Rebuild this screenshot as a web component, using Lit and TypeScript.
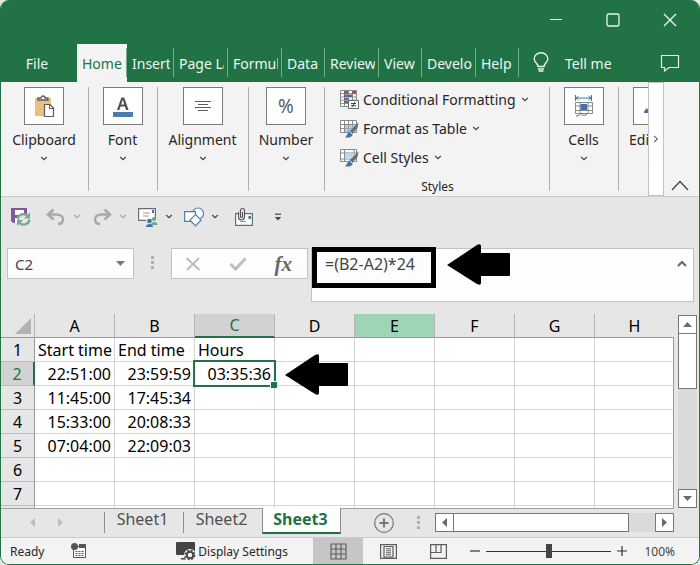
import { LitElement, html, css, svg } from "lit";
import { customElement, state } from "lit/decorators.js";
import { classMap } from "lit/directives/class-map.js";

const TABS = [
  { label: "Home", size: "w50" },
  { label: "Insert", size: "w47" },
  { label: "Page La", size: "w54" },
  { label: "Formul", size: "w54" },
  { label: "Data", size: "w43" },
  { label: "Review", size: "w54" },
  { label: "View", size: "w43" },
  { label: "Develo", size: "w54" },
  { label: "Help", size: "w43" },
];

const COLUMNS = ["A", "B", "C", "D", "E", "F", "G", "H"];

const ROWS = [
  ["Start time", "End time", "Hours"],
  ["22:51:00", "23:59:59", "03:35:36"],
  ["11:45:00", "17:45:34"],
  ["15:33:00", "20:08:33"],
  ["07:04:00", "22:09:03"],
  [],
  [],
];

const box = (w: number, h: number, body: unknown) =>
  html`<svg width=${w} height=${h} viewBox="0 0 ${w} ${h}" fill="none" aria-hidden="true">${body}</svg>`;

const chevron = (color = "#444") =>
  box(8, 5, svg`<path d="M1.2 1 L4 3.7 L6.8 1" stroke=${color} stroke-width="1.2"/>`);

const arrow = () =>
  box(63, 41, svg`<path d="M0 21 L30 1 Q34 -1 34 2 V9 H62 Q63 9 63 10 V31 Q63 32 62 32 H34 V39 Q34 42 30 40 Z" fill="#000"/>`);

const brush = svg`<path d="M18.5 2.5 L17.5 8 L11.5 14 L9 11.8 Z" fill="#6b6b6b"/><path d="M11 11.6 L13 13.4 C12.6 17 9 18 5 17.4 C7.5 16 7 12 11 11.6 Z" fill="#3f74ab"/><path d="M9.6 11.6 L12.6 14.2" stroke="#fff" stroke-width="1"/>`;

const icons = {
  clipboard: box(22, 22, svg`<path d="M2 3 H18 V21 H2 Z" fill="#e8c07c"/><path d="M5 5 V3 H8 A2 2 0 0 1 12 3 H15 V5 Z" fill="#fff" stroke="#5a5a5a" stroke-width="1.3"/><path d="M11.5 9.5 H17 L20.5 13 V21.5 H11.5 Z" fill="#fff" stroke="#5a5a5a" stroke-width="1.2"/><path d="M16.5 9.5 V13.5 H20.5" stroke="#5a5a5a"/>`),
  font: box(22, 22, svg`<path d="M5 15 L9.4 2.5 H12.2 L16.6 15 H14 L12.9 11.6 H8.5 L7.4 15 Z M9.2 9.5 H12.3 L10.8 4.8 Z" fill="#505050" fill-rule="evenodd"/><path d="M1 17 H21 V22 H1 Z" fill="#4a7cae"/>`),
  align: box(22, 22, svg`<path d="M3 6.5 H19 M6 9.5 H16 M3 12.5 H19 M6 15.5 H16" stroke="#5c5c5c"/>`),
  cells: box(22, 22, svg`<path d="M3 3 H18 M5.5 1 L3 3 L5.5 5 M15.5 1 L18 3 L15.5 5 M2.5 0 V6 M18.5 0 V6" stroke="#3f74ab"/><path d="M2.5 7.5 H19.5 V18.5 H2.5 Z M2.5 11 H19.5 M2.5 15.5 H19.5 M7 7.5 V18.5 M15 7.5 V18.5" fill="#fff" stroke="#8a8a8a"/><path d="M7.5 9 H14 V15 H7.5 Z" fill="#3f74ab"/><path d="M3 21 C6 21 7 18.5 9 18.5 C8 21 13 21 14.5 18.5" stroke="#6a6a6a"/>`),
  edit: box(22, 22, svg`<path d="M0 18 C0 15 2 14 3 13 L4 15 V18 Z" fill="#3f74ab"/>`),
  conditional: box(20, 19, svg`<path d="M.5 .5 H16.5 V16.5 H.5 Z M.5 3.7 H16.5 M.5 7 H16.5 M.5 10.2 H16.5 M.5 13.4 H16.5 M4.5 .5 V16.5 M8.5 .5 V16.5 M12.5 .5 V16.5" fill="#fff" stroke="#8a8a8a"/><path d="M4 1 H8 V4 H4 Z M12 1 H16 V4 H12 Z M4 8 H8 V10 H4 Z" fill="#b4513f"/><path d="M4 4.5 H12 V7 H4 Z M4 11 H8 V13 H4 Z" fill="#3f74ab"/><path d="M8.5 10.5 H18.5 V18.5 H8.5 Z" fill="#fff" stroke="#6a6a6a"/><path d="M11 13.5 H16 M11 15.7 H16 M15 11.8 L12 17.2" stroke="#444"/>`),
  table: box(20, 18, svg`<path d="M.5 .5 H16.5 V12.5 H.5 Z M.5 4.5 H16.5 M.5 8.5 H16.5 M4.5 .5 V12.5 M8.5 .5 V12.5 M12.5 .5 V12.5" fill="#fff" stroke="#8a8a8a"/><path d="M5 5 H16 V12 H5 Z" fill="#b5cde3"/><path d="M5 8.5 H16 M8.5 5 V12 M12.5 5 V12" stroke="#90a9c0"/>${brush}`),
  styles: box(20, 18, svg`<path d="M.5 .5 H16.5 V12.5 H.5 Z M.5 4 H16.5 M.5 10 H16.5 M4.5 .5 V12.5 M14 .5 V12.5" fill="#fff" stroke="#8a8a8a"/><path d="M5 4.5 H14 V10 H5 Z" fill="#c3d7ea"/>${brush}`),
  bulb: box(16, 22, svg`<path d="M5 14.5 C5 11.5 1.2 10.5 1.2 7 A6.8 6.3 0 0 1 14.8 7 C14.8 10.5 11 11.5 11 14.5 Z M5 17 H11 M5.5 19 H10.5" stroke="#e9f4ed" stroke-width="1.4"/>`),
  comment: box(20, 18, svg`<path d="M1.5 1.5 H18.5 V13.5 H9 L4.5 17 V13.5 H1.5 Z" stroke="#e9f4ed" stroke-width="1.2"/>`),
  minimize: box(14, 14, svg`<path d="M1 6.5 H13" stroke="#e9f4ed" stroke-width="1.2"/>`),
  maximize: box(14, 14, svg`<rect x="1" y="1" width="12" height="12" rx="1.5" stroke="#e9f4ed" stroke-width="1.3"/>`),
  close: box(14, 14, svg`<path d="M1 1 L13 13 M13 1 L1 13" stroke="#e9f4ed" stroke-width="1.4"/>`),
  save: box(20, 20, svg`<path d="M0 1 H16 V8 H13 V3 H4 V8 H8 V16 H2 L0 14 Z" fill="#7d5a9b"/><path d="M4 3 H13 V8 H4 Z" fill="#fff"/><path d="M4 11 H7 V16 H4 Z" fill="#fff"/><path d="M6.5 11.5 A6 6 0 0 1 17 9.5 M18.5 12.5 A6 6 0 0 1 8 15.5" stroke="#7da890" stroke-width="2.4"/><path d="M19 5.5 V11.5 H13 Z M6 19 V13 H12 Z" fill="#7da890"/>`),
  undo: box(20, 18, svg`<path d="M7.5 1.5 L2 6.5 L7.5 11.5" stroke="#a9a9a9" stroke-width="2.6"/><path d="M2.5 6.5 H10 C15.5 6.5 17.5 9 17 12 C16.7 14.5 14.5 16 12 16" stroke="#a9a9a9" stroke-width="2.4"/>`),
  redo: box(20, 18, svg`<path d="M12.5 1.5 L18 6.5 L12.5 11.5" stroke="#a9a9a9" stroke-width="2.6"/><path d="M17.5 6.5 H10 C4.5 6.5 2.5 9 3 12 C3.3 14.5 5.5 16 8 16" stroke="#a9a9a9" stroke-width="2.4"/>`),
  mail: box(20, 20, svg`<path d="M.6 1.6 H17.4 V13.4 H.6 Z" fill="#fff" stroke="#6c6c6c" stroke-width="1.2"/><path d="M5 6 H12 M5 9 H11" stroke="#9a9a9a"/><path d="M14 3 H16 V6 H14 Z" fill="#3f74ab"/><path d="M8 12 H19 V20 H8 Z" fill="#e6e6e6"/><circle cx="16" cy="12" r="2.1" fill="#6ba58a"/><path d="M13 18 C13 14 19.5 14 19.5 18 Z" fill="#6ba58a"/><circle cx="11.5" cy="14" r="2.3" fill="#3f74ab"/><path d="M8 20 C8 16 15 16 15 20 Z" fill="#3f74ab"/>`),
  shapes: box(20, 20, svg`<circle cx="14" cy="6.5" r="5.5" fill="#fff" stroke="#4f7fad" stroke-width="1.2"/><path d="M.6 4.6 H11.4 V14.4 H.6 Z" fill="#fff" stroke="#4f7fad" stroke-width="1.2"/><path d="M11.5 7.5 L17 13.2 L11.5 19 L6 13.2 Z" fill="#fff" stroke="#4f7fad" stroke-width="1.2"/>`),
  attach: box(20, 20, svg`<path d="M.6 6.6 H17.4 V18.4 H.6 Z" fill="#fff" stroke="#6c6c6c" stroke-width="1.2"/><path d="M13.5 9 H16 V12 H13.5 Z" fill="#3f74ab"/><path d="M5 14.5 H11" stroke="#999"/><path d="M3.5 5 V10 A3 3 0 0 0 9.5 10 V3.5 A2 2 0 0 0 5.5 3.5 V9.5 A1 1 0 0 0 7.5 9.5 V5" fill="#e6e6e6" stroke="#555" stroke-width="1.1"/>`),
  more: box(8, 8, svg`<path d="M1 1.2 H7" stroke="#444" stroke-width="1.2"/><path d="M.8 4 H7.2 L4 7.4 Z" fill="#444"/>`),
  cancel: box(16, 14, svg`<path d="M1.5 1 L14.5 13 M14 1 L2 13" stroke="#bdbdbd" stroke-width="2"/>`),
  enter: box(18, 14, svg`<path d="M1.5 7 L6.5 12 L16.5 1.5" stroke="#bdbdbd" stroke-width="3"/>`),
  corner: box(16, 16, svg`<path d="M16 0 V16 H0 Z" fill="#b3b3b3"/>`),
  add: box(22, 22, svg`<circle cx="11" cy="11" r="9.3" stroke="#777" stroke-width="1.2"/><path d="M11 6.5 V15.5 M6.5 11 H15.5" stroke="#777" stroke-width="2"/>`),
  macro: box(16, 16, svg`<path d="M2.5 3.5 H14.5 V14.5 H2.5 Z" fill="#fff" stroke="#555"/><path d="M8 1 H15 V5 H8 Z" fill="#555"/><circle cx="3.5" cy="3.5" r="3.5" fill="#555"/><path d="M4.5 8.5 H13 M4.5 10.5 H13 M4.5 12.5 H13" stroke="#555" stroke-dasharray="2 1"/>`),
  display: box(20, 19, svg`<path d="M1 0 H18 A1 1 0 0 1 19 1 V12 A1 1 0 0 1 18 13 H1 A1 1 0 0 1 0 12 V1 A1 1 0 0 1 1 0 Z M8 13 H10 V16 H8 Z M5 16 H12 V17.5 H5 Z" fill="#444"/><circle cx="14" cy="13" r="6" fill="#f3f3f3"/><circle cx="14" cy="13" r="3.2" stroke="#444" stroke-width="1.8"/><circle cx="14" cy="13" r="4.6" stroke="#444" stroke-width="1.4" stroke-dasharray="2.2 1.4"/>`),
  normal: box(17, 17, svg`<path d="M1 1 H16 V16 H1 Z M1 6 H16 M1 11 H16 M6 1 V16 M11 1 V16" stroke="#5c5c5c" stroke-width="1.1"/>`),
  page: box(17, 17, svg`<path d="M.6 1.6 H16.4 V15.4 H.6 Z M4 3.5 H13 V14 H4 Z" stroke="#5c5c5c" stroke-width="1.2"/><path d="M6 5.8 H11 M6 7.8 H11 M6 9.8 H11 M6 11.8 H11" stroke="#5c5c5c"/>`),
  breaks: box(17, 17, svg`<path d="M.6 1.6 H16.4 V15.4 H.6 Z M.6 9.5 H11 V1.6 M6 1.6 V9.5" stroke="#5c5c5c" stroke-width="1.2"/>`),
};

@customElement("app-root")
export class AppRoot extends LitElement {
  @state() private sheet = "Sheet3";
  @state() private tab = "Home";

  static styles = css`
    :host {
      display: block;
      background: #e4ebe7;
      color: #262626;
      font-family: "Noto Sans", "Open Sans", sans-serif;
      font-size: 14px;
    }
    * { box-sizing: border-box; }
    button, input, textarea {
      font: inherit;
      color: inherit;
      border: 0;
      margin: 0;
      padding: 0;
      background: none;
      border-radius: 0;
      outline: none;
    }
    button { display: flex; align-items: center; justify-content: center; white-space: nowrap; flex: none; }
    svg { display: block; flex: none; }
    .window {
      display: flex;
      flex-direction: column;
      min-height: 100vh;
      border: 1px solid #217346;
      border-top: 0;
      border-radius: 9px;
      overflow: hidden;
      background: #e6e6e6;
    }
    .titlebar {
      display: flex;
      justify-content: flex-end;
      align-items: center;
      height: 44px;
      padding: 0 1px 4px 0;
      background: #217346;
    }
    .titlebar button { width: 57px; height: 40px; }
    .tabs {
      display: flex;
      align-items: stretch;
      height: 38px;
      background: #217346;
      color: #eef6f1;
    }
    .tab {
      position: relative;
      justify-content: flex-start;
      padding: 0 4px 0 5px;
      height: 38px;
    }
    .tab::after {
      content: "";
      position: absolute;
      right: 0;
      top: 4px;
      width: 1px;
      height: 29px;
      background: #6fae8b;
    }
    .tab.on { background: #f3f3f3; color: #217346; }
    .clip { overflow: hidden; }
    .w43 { width: 43px; }
    .w47 { width: 47px; }
    .w50 { width: 50px; }
    .w54 { width: 54px; }
    .file { width: 76px; padding-right: 4px; }
    .tell { gap: 16px; padding-left: 14px; }
    .note { margin-left: auto; width: 58px; }
    .ribbon {
      display: grid;
      grid-template-columns: 88px 69px 91px 76px 225px 69px minmax(0, 1fr) 16px 35px;
      height: 115px;
      background: #f3f3f3;
      border-bottom: 1px solid #cbcbcb;
    }
    .group {
      position: relative;
      display: flex;
      flex-direction: column;
      align-items: center;
      padding: 5px 2px 0 0;
      overflow: hidden;
    }
    .group::after {
      content: "";
      position: absolute;
      right: 0;
      top: 5px;
      width: 1px;
      height: 104px;
      background: #b0b0b0;
    }
    .group.last { align-items: flex-start; padding: 5px 0 0 10px; }
    .group.last::after { content: none; }
    .big { flex-direction: column; }
    .last .big { align-items: flex-start; }
    .last .chev { display: none; }
    .tile {
      display: flex;
      align-items: center;
      justify-content: center;
      width: 40px;
      height: 38px;
      border: 1px solid #7b7b7b;
      background: #fff;
    }
    .last .tile { margin-left: 4px; justify-content: flex-start; padding-left: 10px; }
    .percent { font-size: 19px; color: #5c5c5c; }
    .label { line-height: 20px; padding: 5px 0 6px; }
    .group.styles { align-items: stretch; padding: 5px 15px 0; }
    .styles button { height: 29px; gap: 3px; justify-content: flex-start; padding-bottom: 4px; }
    .styles .chev { padding-left: 2px; }
    .caption { margin: auto 0 0; text-align: center; font-size: 12px; line-height: 19px; }
    .scroll { height: 114px; background: #fff; border: 1px solid #c3c3c3; }
    .collapse { align-items: flex-end; padding: 0 4px 5px 0; height: 114px; }
    .quick { display: flex; align-items: center; gap: 11px; height: 41px; padding: 0 0 2px 10px; }
    .quick button { height: 24px; gap: 7px; }
    .quick .save { margin-right: 4px; }
    .quick .attach { margin-left: 5px; }
    .quick .more { margin-left: 8px; }
    .bar { display: flex; align-items: flex-start; padding: 10px 5px 12px 6px; }
    .field { display: flex; align-items: center; height: 31px; background: #fdfdfd; border: 1px solid #c3c3c3; }
    .name { width: 127px; padding: 0 7px; font-size: 15px; color: #444; }
    .name input { flex: 1; min-width: 0; }
    .dots { display: flex; flex-direction: column; gap: 2px; padding: 8px 17px; }
    .dots i { width: 3px; height: 3px; background: #b0b0b0; }
    .actions { width: 137px; justify-content: space-between; padding: 0 15px 0 13px; margin-right: 3px; }
    .fx { font-family: "Liberation Serif", serif; font-style: italic; font-weight: 700; font-size: 21px; line-height: 24px; color: #666; }
    .formula {
      position: relative;
      display: flex;
      flex: 1;
      height: 54px;
      background: #fdfdfd;
      border: 1px solid #c3c3c3;
    }
    .formula textarea {
      flex: 1;
      min-width: 0;
      resize: none;
      padding: 4px 0 0 13px;
      font-size: 16px;
      line-height: 22px;
      color: #444;
      overflow: hidden;
    }
    .formula button { width: 22px; height: 28px; }
    .ring { position: absolute; left: 0; top: -2px; width: 124px; height: 41px; border: 5px solid #000; pointer-events: none; }
    .hint { position: absolute; left: 135px; top: -5px; pointer-events: none; }
    .sheet { display: flex; flex: 1; padding-right: 2px; }
    .gridwrap { flex: 1; min-width: 0; }
    table { width: 100%; table-layout: fixed; border-collapse: separate; border-spacing: 0; color: #000; }
    .c0 { width: 34px; }
    .cn { width: 80px; }
    th, td { height: 24px; padding: 0; line-height: 22px; font-size: 16px; font-weight: 400; white-space: nowrap; }
    th { text-align: center; }
    thead th { border-bottom: 1px solid #999; border-right: 1px solid #b5b5b5; }
    thead th:last-child { border-right: 0; }
    thead .act { background: #d2d2d2; color: #217346; border-bottom: 2px solid #217346; line-height: 21px; }
    thead .hover { background: #9fd5b7; }
    .corner { padding: 0 4px 0 14px; }
    tbody th { background: #e6e6e6; border-bottom: 1px solid #bcbcbc; border-right: 1px solid #999; }
    tbody .act { background: #d2d2d2; color: #217346; border-right: 2px solid #217346; }
    td { background: #fff; border-right: 1px solid #d4d4d4; border-bottom: 1px solid #d4d4d4; padding: 0 3px; }
    td:last-child { border-right-color: #999; }
    .num { text-align: right; }
    .stub { height: 2px; border-bottom: 0; line-height: 0; }
    .sel { position: relative; }
    .sel::before { content: ""; position: absolute; inset: -2px; border: 2px solid #217346; }
    .sel::after { content: ""; position: absolute; right: -3px; bottom: -3px; width: 6px; height: 6px; background: #217346; border: solid #fff; border-width: 1px 0 0 1px; }
    .sel .hint { left: 90px; top: -8px; }
    .vscroll { display: flex; flex-direction: column; width: 19px; margin: 1px 0 0 4px; background: #dadada; }
    .sb { width: 19px; height: 19px; background: #fff; border: 1px solid #777; }
    .vthumb { height: 56px; margin-top: -1px; background: #fff; border: 1px solid #777; }
    .grow { flex: 1; }
    .sheets { display: flex; align-items: flex-start; height: 29px; padding-right: 25px; position: relative; }
    .edge { position: absolute; left: 0; right: 25px; top: 0; height: 1px; background: #a0a0a0; }
    .nav { width: 28px; height: 28px; }
    .nav:first-of-type { margin-left: 17px; }
    .tabset { display: flex; padding-left: 30px; }
    .stab {
      position: relative;
      width: 79px;
      height: 25px;
      padding-right: 2px;
      font-size: 16px;
      line-height: 22px;
      align-items: flex-start;
      color: #505050;
    }
    .stab::before { content: ""; position: absolute; left: 0; top: 4px; height: 21px; width: 1px; background: #8c8c8c; }
    .stab.on { background: #fff; color: #217346; font-weight: 700; height: 26px; border: 1px solid #8c8c8c; border-width: 0 1px 2px; border-bottom-color: #217346; }
    .stab.on::before { content: none; }
    .add { margin: 4px 0 0 32px; }
    .grip { padding: 8px 15px 0 22px; }
    .hscroll { display: flex; flex: 1; margin: 5px 0 0; background: #dadada; }
    .hthumb { flex: 1; height: 19px; margin: 0 26px 0 -1px; background: #fff; border: 1px solid #777; }
    .status {
      display: flex;
      align-items: center;
      height: 27px;
      padding: 0 24px 0 9px;
      background: #f3f3f3;
      border-top: 1px solid #cbcbcb;
      font-size: 12px;
      white-space: nowrap;
    }
    .rec { margin-left: 27px; }
    .disp { margin-left: auto; gap: 2px; padding-right: 25px; }
    .view { width: 50px; height: 26px; }
    .view.on { background: #c6c6c6; }
    .zoom { width: 10px; height: 24px; }
    .range { appearance: none; width: 125px; height: 24px; margin: 0 6px; }
    .range::-webkit-slider-runnable-track { height: 1px; background: #333; }
    .range::-webkit-slider-thumb { appearance: none; width: 6px; height: 14px; margin-top: -7px; background: #444; }
    .zooms { display: flex; align-items: center; padding-left: 7px; }
    .pct { width: 48px; text-align: right; color: #444; }
  `;

  private tri(dir: string, color = "#6a6a6a") {
    const shapes: Record<string, string> = {
      up: "M1 8 H10 L5.5 3 Z",
      down: "M1 3 H10 L5.5 8 Z",
      left: "M8 1 V10 L3 5.5 Z",
      right: "M3 1 V10 L8 5.5 Z",
    };
    return box(11, 11, svg`<path d=${shapes[dir]} fill=${color}/>`);
  }

  private group(label: string, icon: unknown, extra = "") {
    return html`<section class="group ${extra}">
      <button class="big">
        <span class="tile">${icon}</span>
        <span class="label">${label}</span>
        <span class="chev">${chevron()}</span>
      </button>
    </section>`;
  }

  private cell(r: number, c: number) {
    const selected = r === 1 && c === 2;
    return html`<td class=${classMap({ num: r > 0, sel: selected })}>${ROWS[r][c] ?? ""}${selected
      ? html`<span class="hint">${arrow()}</span>`
      : ""}</td>`;
  }

  render() {
    return html`<main class="window">
      <header>
        <div class="titlebar">
          <button aria-label="Minimize">${icons.minimize}</button>
          <button aria-label="Maximize">${icons.maximize}</button>
          <button aria-label="Close">${icons.close}</button>
        </div>
        <nav class="tabs">
          <button class="file">File</button>
          ${TABS.map(
            (t) => html`<button
              class=${classMap({ tab: true, on: t.label === this.tab, [t.size]: true })}
              @click=${() => (this.tab = t.label)}
            ><span class="clip">${t.label}</span></button>`
          )}
          <button class="tell">${icons.bulb}<span>Tell me</span></button>
          <button class="note" aria-label="Comments">${icons.comment}</button>
        </nav>
      </header>

      <div class="ribbon">
        ${this.group("Clipboard", icons.clipboard)}
        ${this.group("Font", icons.font)}
        ${this.group("Alignment", icons.align)}
        ${this.group("Number", html`<span class="percent">%</span>`)}
        <section class="group styles">
          <button>${icons.conditional}<span>Conditional Formatting</span><span class="chev">${chevron()}</span></button>
          <button>${icons.table}<span>Format as Table</span><span class="chev">${chevron()}</span></button>
          <button>${icons.styles}<span>Cell Styles</span><span class="chev">${chevron()}</span></button>
          <p class="caption">Styles</p>
        </section>
        ${this.group("Cells", icons.cells)}
        ${this.group("Edi", icons.edit, "last")}
        <button class="scroll" aria-label="Scroll ribbon">
          ${box(6, 8, svg`<path d="M1 .8 L4.5 4 L1 7.2" stroke="#666" stroke-width="1.1"/>`)}
        </button>
        <button class="collapse" aria-label="Collapse ribbon">
          ${box(18, 11, svg`<path d="M1 10 L9 1.5 L17 10" stroke="#444" stroke-width="1.4"/>`)}
        </button>
      </div>

      <div class="quick">
        <button class="save" aria-label="Save">${icons.save}</button>
        <button aria-label="Undo">${icons.undo}${chevron("#a9a9a9")}</button>
        <button aria-label="Redo">${icons.redo}${chevron("#a9a9a9")}</button>
        <button aria-label="Mail recipients">${icons.mail}${chevron()}</button>
        <button aria-label="Shapes">${icons.shapes}${chevron()}</button>
        <button class="attach" aria-label="Email attachment">${icons.attach}</button>
        <button class="more" aria-label="Customize toolbar">${icons.more}</button>
      </div>

      <div class="bar">
        <div class="field name">
          <input aria-label="Name box" value="C2" />${this.tri("down", "#777")}
        </div>
        <div class="dots"><i></i><i></i><i></i></div>
        <div class="field actions">
          <button aria-label="Cancel">${icons.cancel}</button>
          <button aria-label="Enter">${icons.enter}</button>
          <button class="fx" aria-label="Insert function">fx</button>
        </div>
        <div class="formula">
          <textarea aria-label="Formula" spellcheck="false" .value=${"=(B2-A2)*24"}></textarea>
          <button aria-label="Collapse formula bar">
            ${box(10, 7, svg`<path d="M1 6 L5 2 L9 6" stroke="#666" stroke-width="2"/>`)}
          </button>
          <span class="ring"></span>
          <span class="hint">${arrow()}</span>
        </div>
      </div>

      <div class="sheet">
        <div class="gridwrap">
          <table>
            <colgroup>
              <col class="c0" />${COLUMNS.slice(0, 7).map(() => html`<col class="cn" />`)}<col />
            </colgroup>
            <thead>
              <tr>
                <th class="corner">${icons.corner}</th>
                ${COLUMNS.map((c) => html`<th scope="col" class=${classMap({ act: c === "C", hover: c === "E" })}>${c}</th>`)}
              </tr>
            </thead>
            <tbody>
              ${ROWS.map(
                (_, r) => html`<tr>
                  <th scope="row" class=${classMap({ act: r === 1 })}>${r + 1}</th>
                  ${COLUMNS.map((_c, c) => this.cell(r, c))}
                </tr>`
              )}
              <tr><th class="stub"></th>${COLUMNS.map(() => html`<td class="stub"></td>`)}</tr>
            </tbody>
          </table>
        </div>
        <div class="vscroll">
          <button class="sb" aria-label="Scroll up">${this.tri("up")}</button>
          <div class="vthumb"></div>
          <div class="grow"></div>
          <button class="sb" aria-label="Scroll down">${this.tri("down")}</button>
        </div>
      </div>

      <div class="sheets">
        <div class="edge"></div>
        <button class="nav" aria-label="Previous sheet">${this.tri("left", "#bdbdbd")}</button>
        <button class="nav" aria-label="Next sheet">${this.tri("right", "#bdbdbd")}</button>
        <div class="tabset">
          ${["Sheet1", "Sheet2", "Sheet3"].map(
            (s) => html`<button class=${classMap({ stab: true, on: s === this.sheet })} @click=${() => (this.sheet = s)}>${s}</button>`
          )}
        </div>
        <button class="add" aria-label="New sheet">${icons.add}</button>
        <div class="dots grip"><i></i><i></i><i></i></div>
        <div class="hscroll">
          <button class="sb" aria-label="Scroll left">${this.tri("left")}</button>
          <div class="hthumb"></div>
          <button class="sb" aria-label="Scroll right">${this.tri("right")}</button>
        </div>
      </div>

      <footer class="status">
        <span>Ready</span>
        <button class="rec" aria-label="Record macro">${icons.macro}</button>
        <button class="disp">${icons.display}<span>Display Settings</span></button>
        <button class="view on" aria-label="Normal view">${icons.normal}</button>
        <button class="view" aria-label="Page layout view">${icons.page}</button>
        <button class="view" aria-label="Page break view">${icons.breaks}</button>
        <div class="zooms">
          <button class="zoom" aria-label="Zoom out">${box(10, 10, svg`<path d="M0 5 H10" stroke="#333" stroke-width="1.2"/>`)}</button>
          <input class="range" type="range" aria-label="Zoom" min="0" max="100" value="50" />
          <button class="zoom" aria-label="Zoom in">${box(10, 10, svg`<path d="M0 5 H10 M5 0 V10" stroke="#333" stroke-width="1.2"/>`)}</button>
          <span class="pct">100%</span>
        </div>
      </footer>
    </main>`;
  }
}
